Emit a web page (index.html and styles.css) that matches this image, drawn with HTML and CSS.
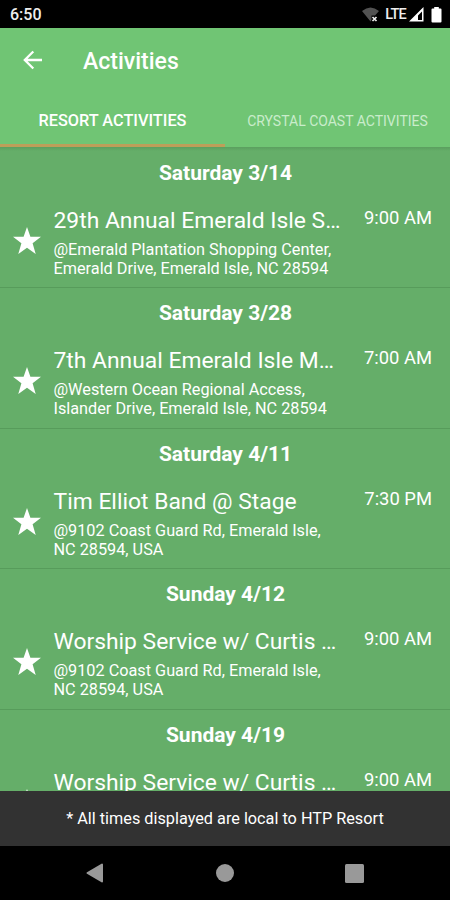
FILE: index.html
```html
<!DOCTYPE html>
<html lang="en">
<head>
<meta charset="utf-8">
<title>Activities</title>
<link rel="stylesheet" href="styles.css">
</head>
<body>
<div class="statusbar">
  <span class="clock">6:50</span>
  <svg class="wifi" width="17" height="16" viewBox="0 0 17 16"><path d="M0 4Q8.500-3 17 4L13 8.500H9.500V13L8.500 14.500Z" fill="#525252"/><path d="M10.500 10l4 4m0-4l-4 4" stroke="#eee" stroke-width="1.700"/></svg>
  <span class="lte">LTE</span>
  <svg class="signal" width="15" height="15" viewBox="0 0 15 15"><path fill="#fff" fill-rule="evenodd" d="M14.500 0V14.500H0ZM13 4.500L9 8.500V13H13Z"/></svg>
  <svg class="battery" width="11" height="16" viewBox="0 0 11 16"><path fill="#fff" d="M3.200 0h4.600v1.500h1.700q1 0 1 1v12q0 1-1 1h-8q-1 0-1-1v-12q0-1 1-1h1.700z"/></svg>
</div>
<header class="appbar">
  <div class="toolbar">
    <svg class="back" width="20" height="20" viewBox="0 0 20 20"><path d="M19 10H2M10.300 1.500L1.800 10l8.500 8.500" fill="none" stroke="#fff" stroke-width="2.300"/></svg>
    <h1>Activities</h1>
  </div>
  <nav class="tabs">
    <span class="tab active">RESORT ACTIVITIES</span>
    <span class="tab">CRYSTAL COAST ACTIVITIES</span>
  </nav>
</header>
<main class="list">
  <section class="day">
    <h2>Saturday 3/14</h2>
    <div class="row">
      <svg class="star" width="28" height="27" viewBox="0 0 28 27"><path d="M14 0l3.400 9.800H28l-8.400 6.500L22.700 27 14 20.700 5.300 27l3.100-10.700L0 9.800h10.600z"/></svg>
      <div class="info"><h3>29th Annual Emerald Isle S…</h3><p>@Emerald Plantation Shopping Center,<br>Emerald Drive, Emerald Isle, NC 28594</p></div>
      <time>9:00 AM</time>
    </div>
  </section>
  <section class="day">
    <h2>Saturday 3/28</h2>
    <div class="row">
      <svg class="star" width="28" height="27" viewBox="0 0 28 27"><path d="M14 0l3.400 9.800H28l-8.400 6.500L22.700 27 14 20.700 5.300 27l3.100-10.700L0 9.800h10.600z"/></svg>
      <div class="info"><h3>7th Annual Emerald Isle M…</h3><p>@Western Ocean Regional Access,<br>Islander Drive, Emerald Isle, NC 28594</p></div>
      <time>7:00 AM</time>
    </div>
  </section>
  <section class="day">
    <h2>Saturday 4/11</h2>
    <div class="row">
      <svg class="star" width="28" height="27" viewBox="0 0 28 27"><path d="M14 0l3.400 9.800H28l-8.400 6.500L22.700 27 14 20.700 5.300 27l3.100-10.700L0 9.800h10.600z"/></svg>
      <div class="info"><h3>Tim Elliot Band @ Stage</h3><p>@9102 Coast Guard Rd, Emerald Isle,<br>NC 28594, USA</p></div>
      <time>7:30 PM</time>
    </div>
  </section>
  <section class="day">
    <h2>Sunday 4/12</h2>
    <div class="row">
      <svg class="star" width="28" height="27" viewBox="0 0 28 27"><path d="M14 0l3.400 9.800H28l-8.400 6.500L22.700 27 14 20.700 5.300 27l3.100-10.700L0 9.800h10.600z"/></svg>
      <div class="info"><h3>Worship Service w/ Curtis …</h3><p>@9102 Coast Guard Rd, Emerald Isle,<br>NC 28594, USA</p></div>
      <time>9:00 AM</time>
    </div>
  </section>
  <section class="day">
    <h2>Sunday 4/19</h2>
    <div class="row">
      <svg class="star" width="28" height="27" viewBox="0 0 28 27"><path d="M14 0l3.400 9.800H28l-8.400 6.500L22.700 27 14 20.700 5.300 27l3.100-10.700L0 9.800h10.600z"/></svg>
      <div class="info"><h3>Worship Service w/ Curtis …</h3></div>
      <time>9:00 AM</time>
    </div>
  </section>
</main>
<div class="snackbar">* All times displayed are local to HTP Resort</div>
<footer class="navbar">
  <svg width="18" height="20" viewBox="0 0 18 20"><path d="M1.500 10L16 1.500v17z" fill="#999" stroke="#999" stroke-width="2" stroke-linejoin="round"/></svg>
  <svg width="18" height="18" viewBox="0 0 18 18"><circle cx="9" cy="9" r="9" fill="#999"/></svg>
  <svg width="19" height="19" viewBox="0 0 19 19"><rect width="19" height="19" rx="1.500" fill="#999"/></svg>
</footer>
</body>
</html>
```
FILE: styles.css
```css
* { box-sizing: border-box; margin: 0; padding: 0; }
body {
  width: 450px;
  height: 900px;
  overflow: hidden;
  display: flex;
  flex-direction: column;
  font-family: Roboto, sans-serif;
  color: #fff;
  background: #000;
}
svg { display: block; flex: none; }
.statusbar {
  height: 27.5px;
  flex: none;
  display: flex;
  align-items: center;
  padding: 2px 8px 0 10px;
  background: #000;
}
.clock { font-size: 16px; font-weight: 500; margin-right: auto; color: #eee; }
.wifi { margin-top: 1px; }
.lte { font-size: 14.5px; font-weight: 500; color: #eee; letter-spacing: -0.8px; margin: 0 3px 0 6px; }
.signal { margin-right: 7px; }
.appbar { height: 119.5px; flex: none; background: #70c574; }
.toolbar { height: 67.5px; display: flex; align-items: center; padding-left: 23px; }
.back { margin-top: -2px; }
.toolbar h1 { font-size: 23px; font-weight: 500; margin-left: 40px; }
.tabs { display: flex; height: 52px; }
.tab {
  flex: 1;
  text-align: center;
  font-size: 14px;
  line-height: 52px;
  white-space: nowrap;
  color: #c9eccb;
  border-bottom: 3px solid transparent;
}
.tab.active { font-size: 16.3px; font-weight: 500; color: #fff; border-bottom-color: #bd9f59; }
.list {
  height: 644px;
  flex: none;
  overflow: hidden;
  background: linear-gradient(#5b9f5f, #65ae69 4px);
}
.day { height: 140.4px; padding-top: 12px; border-bottom: 1px solid #579c5b; }
.day:first-child { height: 141.4px; }
.day + .day { padding-top: 11px; }
.day h2 { font-size: 21px; line-height: 29px; font-weight: 700; text-align: center; padding-left: 1px; }
.row { display: flex; padding: 18px 18px 0 13px; }
.star { fill: #fff; margin: 21px 12.500px 0 0; }
.info { flex: 1; white-space: nowrap; }
.info h3 { font-size: 22.85px; line-height: 30px; font-weight: 400; }
.info p { font-size: 16.25px; line-height: 19px; margin-top: 4px; }
.row time { font-size: 18.4px; line-height: 24px; }
.snackbar {
  height: 55px;
  flex: none;
  background: #323232;
  font-size: 16.25px;
  line-height: 55px;
  text-align: center;
}
.navbar {
  flex: 1;
  display: flex;
  justify-content: space-between;
  align-items: center;
  padding: 0 86px;
}
```
